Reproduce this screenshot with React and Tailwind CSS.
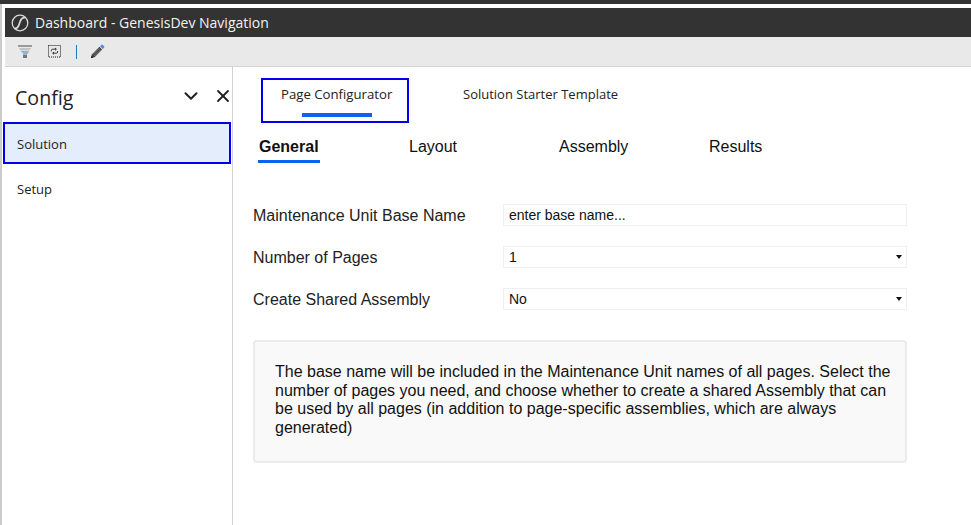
import { ChevronDown, X } from 'lucide-react';

const ui = { fontFamily: '"Open Sans", "Noto Sans", sans-serif' };
const form = { fontFamily: '"Liberation Sans", Arial, sans-serif' };

const TABS = [
  { label: 'General', active: true },
  { label: 'Layout' },
  { label: 'Assembly' },
  { label: 'Results' },
];

const FIELDS = [
  { label: 'Maintenance Unit Base Name', value: 'enter base name...' },
  { label: 'Number of Pages', value: '1', select: true },
  { label: 'Create Shared Assembly', value: 'No', select: true },
];

const LogoIcon = () => (
  <svg width="18" height="18" viewBox="0 0 18 18" fill="none" stroke="#d8d8d8" strokeWidth="1.3">
    <circle cx="9" cy="9" r="7.8" />
    <path d="M3.6 14.6c2.4 0 3.4-1.2 4.2-3.4l1.6-4.4c.8-2 2-3.2 4.6-3.4" strokeWidth="1.8" />
  </svg>
);

const FilterIcon = () => (
  <svg width="15" height="15" viewBox="0 0 15 15">
    <rect x="0" y="1" width="14" height="2" fill="#9a9a9a" />
    <path d="M1 4h12l-1.5 2.5h-9z" fill="#c4c4c4" />
    <path d="M2.8 7h8.4L9.5 10h-4z" fill="#7db8e8" />
    <rect x="5" y="10.5" width="4" height="3.5" fill="#777" />
  </svg>
);

const SelectIcon = () => (
  <svg width="13" height="13" viewBox="0 0 13 13" fill="none">
    <rect x="0.5" y="0.5" width="12" height="11.5" stroke="#111" strokeDasharray="1 1" />
    <path d="M3.4 6.4V5.4a1.2 1.2 0 0 1 1.2-1.2h3.2M7 3l1.4 1.2L7 5.4M9.6 6v1a1.2 1.2 0 0 1-1.2 1.2H5.2M6 7 4.6 8.2 6 9.4" stroke="#333" strokeWidth="1" />
  </svg>
);

const PencilIcon = () => (
  <svg width="15" height="15" viewBox="0 0 15 15">
    <path d="M1 14l.8-3.6 7.6-7.6 2.8 2.8-7.6 7.6z" fill="#444" />
    <path d="M3 10.5l6.6-6.6M4.5 12l6.6-6.6" stroke="#aaa" strokeWidth=".6" />
    <path d="M10 2.2l1.2-1.2a1.2 1.2 0 0 1 1.7 0l1.1 1.1a1.2 1.2 0 0 1 0 1.7L12.8 5z" fill="#4a90d9" />
    <path d="M1 14l.5-2.2 1.7 1.7z" fill="#111" />
  </svg>
);

export default function App() {
  return (
    <div className="h-[525px] w-[971px] overflow-hidden bg-white flex flex-col" style={ui}>
      <div className="h-1 bg-[#333333] shrink-0" />
      <div className="flex flex-1 flex-col pt-1 pl-[3px] border-l-2 border-[#cccccc] min-h-0">
        {/* title bar */}
        <div className="h-[29px] shrink-0 bg-[#333333] flex items-center pl-[6px] gap-[6px] text-[#f2f2f2] text-[14px]">
          <LogoIcon />
          <span>Dashboard - GenesisDev Navigation</span>
        </div>

        {/* toolbar */}
        <div className="h-[30px] shrink-0 bg-[#e9e9e9] border-b border-[#d4d4d4] flex items-center pl-[13px]">
          <FilterIcon />
          <span className="ml-[15px]"><SelectIcon /></span>
          <span className="ml-[15px] h-[14px] w-px bg-[#2f6fc4]" />
          <span className="ml-[13px]"><PencilIcon /></span>
        </div>

        <div className="flex flex-1 min-h-0 -ml-[3px]">
          {/* sidebar */}
          <aside className="w-[231px] shrink-0 border-r border-[#d0d0d0]">
            <div className="h-[55px] flex items-center pl-[13px] text-[#222222]">
              <span className="text-[19.6px] mt-[7px]">Config</span>
              <ChevronDown size={22} strokeWidth={2.2} className="ml-auto mr-[11px] mt-[3px] shrink-0" />
              <X size={20} strokeWidth={2.2} className="-mr-[1px] mt-[3px] shrink-0" />
            </div>
            <div className="ml-[1px] h-[42px] w-[228px] border-2 border-[#0000ee] bg-[#e4edfc] flex items-center pl-[12px] pt-[3px] text-[13px] text-[#222222]">
              Solution
            </div>
            <div className="ml-[15px] mt-[15px] text-[13px] leading-[20px] text-[#222222]">Setup</div>
          </aside>

          {/* main */}
          <main className="flex-1 min-w-0 pl-[20px]">
            <div className="flex items-start pt-[11px] text-[13px] text-[#222222]">
              <div className="relative ml-[8px] h-[45px] w-[148px] border-2 border-[#0000ee] pt-[5px] pl-[18px] text-[13.2px]">
                <span>Page Configurator</span>
                <span className="absolute left-[39px] bottom-[4px] h-[4px] w-[70px] bg-[#0f62f0]" />
              </div>
              <span className="ml-[54px] mt-[7px]">Solution Starter Template</span>
            </div>

            <div className="flex mt-[12px] ml-[6px] text-[16px] text-[#111111]" style={form}>
              {TABS.map((t) => (
                <div key={t.label} className="w-[150px] h-[30px] relative">
                  <span className={t.active ? 'font-bold' : ''}>{t.label}</span>
                  {t.active && <span className="absolute left-[-1px] top-[25px] h-[3px] w-[62px] bg-[#0f62f0]" />}
                </div>
              ))}
            </div>

            <div className="mt-[39px] flex flex-col gap-[20px] text-[16px] text-[#222222]" style={form}>
              {FIELDS.map((f) => (
                <div key={f.label} className="flex items-center h-[22px]">
                  <span className="w-[250px] shrink-0 pt-[2px]">{f.label}</span>
                  <div className="relative w-[404px] h-[22px] border border-[#f0f0f0] flex items-center pl-[5px] text-[14px] text-[#111111]">
                    {f.value}
                    {f.select && (
                      <span className="absolute right-[4px] top-[8px] w-0 h-0 border-x-[3px] border-t-[4px] border-x-transparent border-t-[#111111]" />
                    )}
                  </div>
                </div>
              ))}
            </div>

            <div className="mt-[30px] w-[654px] h-[123px] rounded-[4px] bg-[#f9f9f9] border-2 border-[#ebebeb] pt-[21px] pl-[20px] pr-[10px] text-[16px] leading-[18.7px] text-[#111111]" style={form}>
              The base name will be included in the Maintenance Unit names of all pages. Select the number of pages you need, and choose whether to create a shared Assembly that can be used by all pages (in addition to page-specific assemblies, which are always generated)
            </div>
          </main>
        </div>
      </div>
    </div>
  );
}
